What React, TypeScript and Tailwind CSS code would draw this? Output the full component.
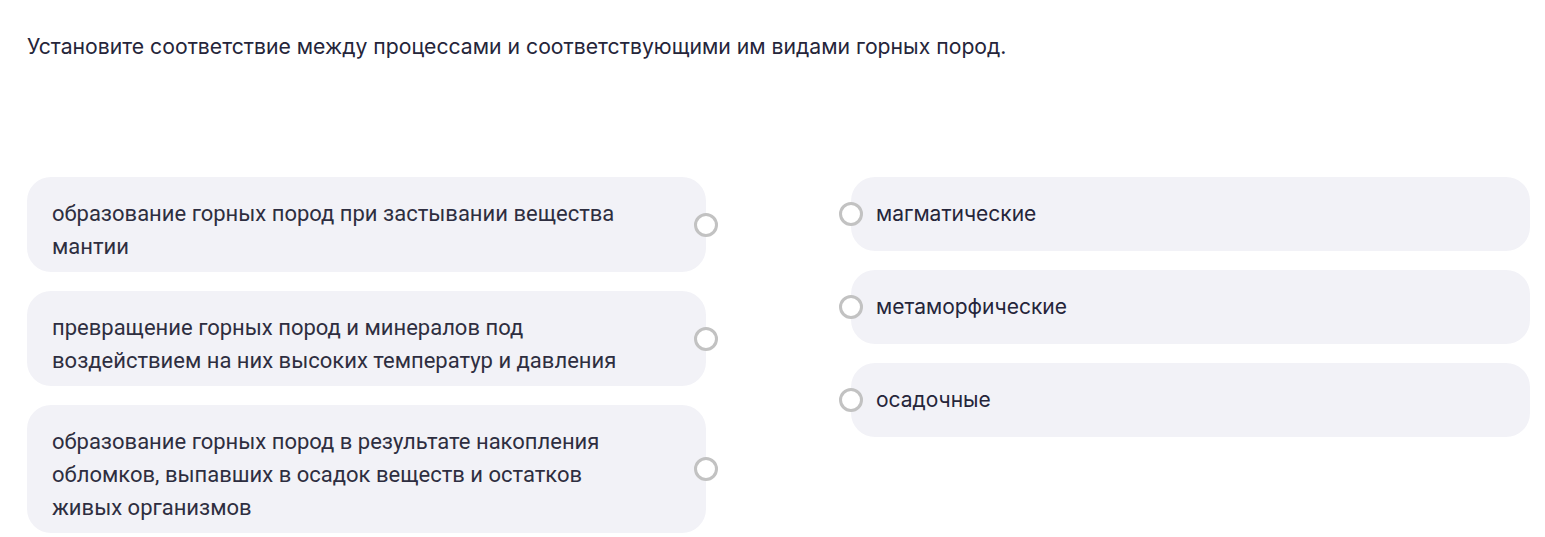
import React from 'react';

const processes = [
  'образование горных пород при застывании вещества мантии',
  'превращение горных пород и минералов под воздействием на них высоких температур и давления',
  'образование горных пород в результате накопления обломков, выпавших в осадок веществ и остатков живых организмов',
];

const rockTypes = ['магматические', 'метаморфические', 'осадочные'];

const Radio: React.FC<{ className?: string }> = ({ className = '' }) => (
  <span
    className={`absolute top-1/2 -translate-y-1/2 w-6 h-6 rounded-full border-[3px] border-[#c2c2c2] bg-white ${className}`}
  />
);

export default function App() {
  return (
    <div className="w-[1545px] h-[537px] overflow-hidden bg-white text-[#25253a] font-['Inter',sans-serif] pl-[27px] pr-[15px]">
      <p className="pt-[32px] text-[21.2px] leading-[28px]">
        Установите соответствие между процессами и соответствующими им видами горных пород.
      </p>

      <div className="mt-[117px] grid grid-cols-2 gap-x-[145px]">
        {/* Left column - processes */}
        <div className="flex flex-col gap-[19px]">
          {processes.map((text, i) => (
            <div key={i} className="relative bg-[#f2f2f7] rounded-3xl pl-[25px] pt-[20px] pb-[9px]">
              <p className="font-['Roboto',sans-serif] text-[22px] leading-[33px] text-[#2e2e40] max-w-[578px]">{text}</p>
              <Radio className="-right-[12px]" />
            </div>
          ))}
        </div>

        {/* Right column - rock types */}
        <div className="flex flex-col gap-[19px]">
          {rockTypes.map((text, i) => (
            <div key={i} className="relative bg-[#f2f2f7] rounded-3xl pl-[25px] h-[74px] flex items-center">
              <Radio className="-left-[12px]" />
              <span className="text-[21px] leading-[28px]">{text}</span>
            </div>
          ))}
        </div>
      </div>
    </div>
  );
}
